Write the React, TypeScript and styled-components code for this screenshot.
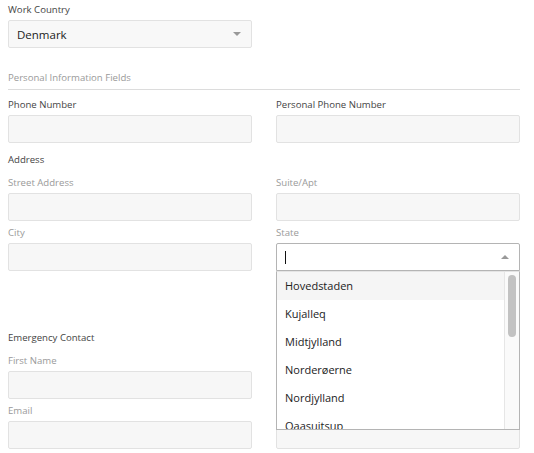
import React from 'react';
import styled, { createGlobalStyle } from 'styled-components';

const GlobalStyle = createGlobalStyle`
  body {
    margin: 0;
    background: #fff;
    font-family: 'Open Sans', 'Liberation Sans', sans-serif;
  }
`;

const Page = styled.div`
  width: 512px;
  padding: 3px 0 0 8px;
`;

const Grid = styled.div`
  display: grid;
  grid-template-columns: 244px 244px;
  column-gap: 24px;
  row-gap: 5px;
`;

const Field = styled.div`
  position: relative;
  display: flex;
  flex-direction: column;
`;

const Label = styled.label<{ $muted?: boolean }>`
  font-size: 9.6px;
  line-height: 14px;
  min-height: 14px;
  color: ${(p) => (p.$muted ? '#9a9a9a' : '#444')};
  margin-bottom: 3px;
`;

const Input = styled.div`
  height: 28px;
  box-sizing: border-box;
  background: #f7f7f7;
  border: 1px solid #e2e2e2;
  border-radius: 2px;
`;

const SelectBox = styled.div<{ $open?: boolean }>`
  height: 28px;
  box-sizing: border-box;
  display: flex;
  align-items: center;
  justify-content: space-between;
  padding: 0 10px 0 8px;
  font-size: 11.5px;
  color: #222;
  background: ${(p) => (p.$open ? '#fff' : '#f8f8f8')};
  border: 1px solid ${(p) => (p.$open ? '#b4b4b4' : '#e2e2e2')};
  border-radius: ${(p) => (p.$open ? '2px 2px 0 0' : '2px')};
`;

const Caret = styled.span<{ $up?: boolean }>`
  width: 0;
  height: 0;
  border-left: 4px solid transparent;
  border-right: 4px solid transparent;
  ${(p) => (p.$up ? 'border-bottom: 4px solid #999;' : 'border-top: 4px solid #999;')}
`;

const TextCursor = styled.span`
  display: block;
  width: 1px;
  height: 13px;
  background: #111;
`;

const SectionTitle = styled.div`
  margin-top: 23px;
  padding-bottom: 4px;
  border-bottom: 1px solid #dcdcdc;
  font-size: 9.6px;
  line-height: 14px;
  color: #9a9a9a;
  margin-bottom: 8px;
`;

const GroupTitle = styled.div`
  grid-column: 1 / -1;
  font-size: 9.6px;
  line-height: 14px;
  color: #444;
  margin: 5px 0 4px;
`;

const Dropdown = styled.div`
  position: absolute;
  top: 100%;
  left: 0;
  right: 0;
  z-index: 5;
  height: 159px;
  box-sizing: border-box;
  display: flex;
  overflow: hidden;
  background: #fff;
  border: 1px solid #b4b4b4;
  border-top: 1px solid #e4e4e4;
`;

const OptionList = styled.ul`
  flex: 1;
  margin: 0;
  padding: 0;
  list-style: none;
  overflow: hidden;
`;

const Option = styled.li<{ $active?: boolean }>`
  height: 28px;
  line-height: 28px;
  padding: 0 8px;
  font-size: 11px;
  color: #222;
  background: ${(p) => (p.$active ? '#f5f5f5' : '#fff')};
`;

const ScrollTrack = styled.div`
  width: 15px;
  flex: none;
  box-sizing: border-box;
  padding: 3px;
  background: #fafafa;
  border-left: 1px solid #e6e6e6;
`;

const ScrollThumb = styled.div`
  width: 8px;
  height: 62px;
  border-radius: 5px;
  background: #c2c2c2;
`;

const states = [
  'Hovedstaden',
  'Kujalleq',
  'Midtjylland',
  'Norderøerne',
  'Nordjylland',
  'Qaasuitsup',
  'Qeqqata',
  'Sermersooq',
  'Sjælland',
  'Syddanmark',
];

const App: React.FC = () => {
  return (
    <Page>
      <GlobalStyle />
      <Grid>
        <Field>
          <Label>Work Country</Label>
          <SelectBox>
            <span>Denmark</span>
            <Caret />
          </SelectBox>
        </Field>
      </Grid>

      <SectionTitle>Personal Information Fields</SectionTitle>

      <Grid>
        <Field>
          <Label>Phone Number</Label>
          <Input />
        </Field>
        <Field>
          <Label>Personal Phone Number</Label>
          <Input />
        </Field>

        <GroupTitle>Address</GroupTitle>
        <Field>
          <Label $muted>Street Address</Label>
          <Input />
        </Field>
        <Field>
          <Label $muted>Suite/Apt</Label>
          <Input />
        </Field>
        <Field>
          <Label $muted>City</Label>
          <Input />
        </Field>
        <Field>
          <Label $muted>State</Label>
          <SelectBox $open>
            <TextCursor />
            <Caret $up />
          </SelectBox>
          <Dropdown>
            <OptionList>
              {states.map((s, i) => (
                <Option key={s} $active={i === 0}>
                  {s}
                </Option>
              ))}
            </OptionList>
            <ScrollTrack>
              <ScrollThumb />
            </ScrollTrack>
          </Dropdown>
        </Field>
        <div />
        <Field>
          <Label $muted />
          <Input />
        </Field>

        <GroupTitle>Emergency Contact</GroupTitle>
        <Field>
          <Label $muted>First Name</Label>
          <Input />
        </Field>
        <Field>
          <Label $muted />
          <Input />
        </Field>
        <Field>
          <Label $muted>Email</Label>
          <Input />
        </Field>
        <Field>
          <Label $muted />
          <Input />
        </Field>
      </Grid>
    </Page>
  );
};

export default App;
